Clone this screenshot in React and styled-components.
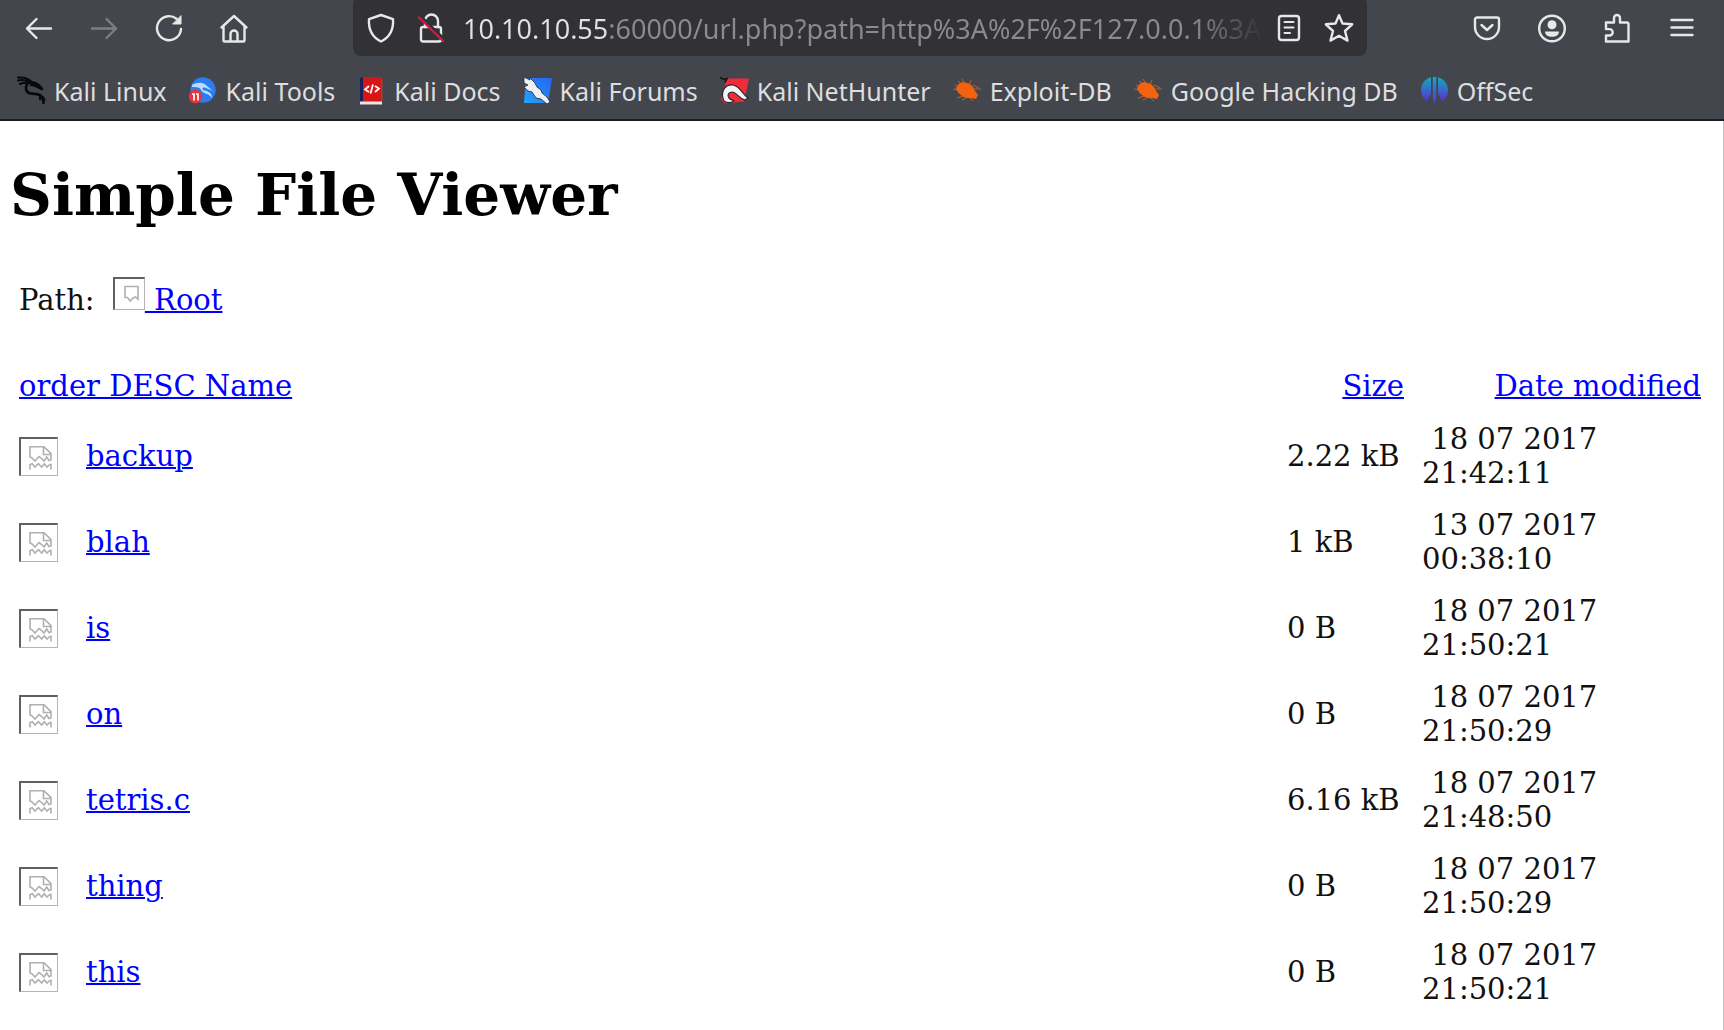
import React from "react";
import styled, { createGlobalStyle } from "styled-components";

const GlobalStyle = createGlobalStyle`
  * { box-sizing: border-box; }
  html, body { margin: 0; background: #fff; }
`;

const serif = `"DejaVu Serif", serif`;
const sans = `"Noto Sans", sans-serif`;

const Window = styled.div`
  display: flex;
  flex-direction: column;
  min-height: 100vh;
  overflow: hidden;
`;

const Chrome = styled.header`
  background: #44464e;
  border-bottom: 2px solid #1c1d22;
  font-family: ${sans};
  color: #dededf;
`;

const Toolbar = styled.div`
  display: flex;
  align-items: center;
  gap: 87px;
  height: 56px;
  padding: 0 10px 0 6px;
`;

const ButtonGroup = styled.div`
  display: flex;
`;

const IconButton = styled.button`
  display: flex;
  align-items: center;
  justify-content: center;
  flex: none;
  width: ${(p) => (p.$compact ? 50 : 65)}px;
  height: 54px;
  margin: 0 0 1px;
  padding: 0;
  border: 0;
  background: none;
  color: ${(p) => (p.disabled ? "#7d7e84" : "#e8e8e6")};
`;

const UrlBar = styled.div`
  display: flex;
  align-items: center;
  flex: 1;
  min-width: 0;
  height: 56px;
  padding: 0 3px;
  background: #313136;
  border-radius: 3px 3px 8px 8px;
`;

const UrlInput = styled.input`
  flex: 1;
  min-width: 0;
  height: 54px;
  margin: 0;
  padding: 0 0 0 7px;
  border: 0;
  outline: 0;
  font-family: ${sans};
  font-size: 27px;
  color: transparent;
  background: linear-gradient(
    to right,
    #e2e2e2 152px,
    #8b8b8f 152px,
    #8b8b8f calc(100% - 72px),
    transparent
  );
  background-clip: text;
  -webkit-background-clip: text;
`;

const Bookmarks = styled.nav`
  display: flex;
  align-items: center;
  gap: 22px;
  height: 63px;
  padding: 6px 17px 0;
  white-space: nowrap;
`;

const Bookmark = styled.a`
  display: flex;
  align-items: center;
  gap: 8px;
  font-size: 25px;
  line-height: 34px;
  color: inherit;
  text-decoration: none;
`;

const Page = styled.main`
  flex: 1;
  padding: 40px 22px 0 19px;
  border-right: 1px solid #c4c4c6;
  font-family: ${serif};
  font-size: 29px;
  line-height: 34px;
  color: #111;
`;

const Title = styled.h1`
  margin: 0 0 48px -9px;
  font-size: 58px;
  line-height: 68px;
  color: #000;
`;

const PathLine = styled.div`
  margin-bottom: 52px;
`;

const Link = styled.a`
  color: #0000ff;
  text-decoration: underline;
  text-decoration-thickness: 2px;
`;

const MissingImage = styled.svg`
  display: inline-block;
  vertical-align: ${(p) => (p.$inline ? "baseline" : "middle")};
  border: 2px solid;
  border-color: #606060 #b4b4b4 #b4b4b4 #606060;
  border-right-width: 1px;
  border-bottom-width: 1px;
`;

const PathImage = styled(MissingImage)`
  margin-left: 9px;
`;

const Files = styled.table`
  width: 100%;
  table-layout: fixed;
  border-collapse: collapse;
`;

const Col = styled.col`
  width: ${(p) => p.$width};
`;

const HeadCell = styled.th`
  padding: 0 ${(p) => (p.$gap ? 18 : 0)}px 10px 0;
  font-weight: normal;
  text-align: ${(p) => p.$align || "left"};
`;

const Cell = styled.td`
  height: 86px;
  padding: 0 ${(p) => (p.$date ? 80 : 0)}px 0 0;
  vertical-align: middle;
`;

const Stroke = ({ size = 30, width = 2.4, children }) => (
  <svg width={size} height={size} viewBox="0 0 30 30" fill="none" stroke="currentColor"
    strokeWidth={width} strokeLinecap="round" strokeLinejoin="round" aria-hidden="true">
    {children}
  </svg>
);

const BackIcon = () => (
  <Stroke><path d="M27 15.500H3M12.500 6 3 15.500 12.500 25" /></Stroke>
);
const ForwardIcon = () => (
  <Stroke><path d="M3 15.500h24M17.500 6 27 15.500 17.500 25" /></Stroke>
);
const ReloadIcon = () => (
  <Stroke>
    <path d="M27 16A12 12 0 1 1 22.500 5.800" />
    <path d="M27 3v8h-8z" fill="currentColor" strokeWidth="1" />
  </Stroke>
);
const HomeIcon = () => (
  <Stroke>
    <path d="M2.500 14.500 15 3l12.500 11.500M4.500 13v14.500a1 1 0 0 0 1 1h19a1 1 0 0 0 1-1V13" />
    <path d="M11.500 28v-7a3.500 3.500 0 0 1 7 0v7" />
  </Stroke>
);
const ShieldIcon = () => (
  <Stroke><path d="M15 2 27 6.200c.6 9-2.600 17.800-12 22.300C5.600 24 2.400 15.200 3 6.200z" /></Stroke>
);
const LockIcon = () => (
  <Stroke>
    <path d="M9 14V8a6.500 6.500 0 0 1 13 0v6" />
    <path d="M7 14h16a2 2 0 0 1 2 2v10.500a2 2 0 0 1-2 2H7a2 2 0 0 1-2-2V16a2 2 0 0 1 2-2z" />
    <path d="M4.500 3 29 27" stroke="#313136" strokeWidth="3" />
    <path d="M3 4.500 27 28" stroke="#d8173f" />
  </Stroke>
);
const ReaderIcon = () => (
  <Stroke>
    <rect x="5" y="3" width="20" height="24" rx="2.500" />
    <path d="M10.500 9h9M10.500 14.500h9M10.500 20h5.500" strokeWidth="2" />
  </Stroke>
);
const StarIcon = () => (
  <Stroke>
    <path d="M15 2.200 18.500 10.500 28.200 11.300 21 18 23.500 27.600 15 22.700 6.500 27.600 9 18 1.800 11.300 11.500 10.500z" />
  </Stroke>
);
const PocketIcon = () => (
  <Stroke>
    <path d="M5 4.500h20a2 2 0 0 1 2 2V14a12 12 0 0 1-24 0V6.500a2 2 0 0 1 2-2z" />
    <path d="M9.500 12 15 17l5.500-5" />
  </Stroke>
);
const AccountIcon = () => (
  <Stroke>
    <circle cx="15" cy="15.500" r="12.800" />
    <circle cx="15" cy="11.700" r="4.500" fill="currentColor" stroke="none" />
    <path d="M8 18.500h14c0 3.500-3 5.300-7 5.300s-7-1.800-7-5.300z" fill="currentColor" stroke="none" />
  </Stroke>
);
const PuzzleIcon = () => (
  <Stroke>
    <path d="M4 9.500h8V5a3 3 0 0 1 6 0v4.500h7a1.500 1.500 0 0 1 1.500 1.500v17.500H4v-6h3.500a3.200 3.200 0 0 0 0-6.400H4z" />
  </Stroke>
);
const MenuIcon = () => (
  <Stroke><path d="M4.500 7h21M4.500 14.500h21M4.500 22h21" /></Stroke>
);

const Fav = ({ children }) => (
  <svg width="29" height="29" viewBox="0 0 29 29" aria-hidden="true">{children}</svg>
);

const DragonFav = () => (
  <Fav>
    <g fill="none" stroke="#08090b" strokeLinecap="round" strokeLinejoin="round">
      <path d="M1 1.500C6 1 11 2 15 6M1 4.500c4-1 8 0 12 2M3 8c3-1.500 6-1.500 10-1" strokeWidth="2" />
      <path d="M12 6c-4 3-4 9 0 11 4 1.500 9 0 12 3 2 2.500 2.500 4.500 2.500 7" strokeWidth="2.600" />
      <path d="M13 6.500c4-.5 8 1 12 6.500l-5-2.500c-2-1-4-1.500-6-1.500" strokeWidth="2.600" />
      <path d="M23 19.500v4M26 21l1.500 3" strokeWidth="2" />
    </g>
  </Fav>
);
const ToolsFav = () => (
  <Fav>
    <circle cx="14" cy="14" r="12.700" fill="#2a7cf0" />
    <path d="M3 9c6-3 11-3 15 1l6 5-7-3c-3-1-4 0-3 2 4 1 9 2 9 8-3-5-9-4-11-8-1-3-5-3-9-3z" fill="#b9dcfb" />
    <circle cx="6.500" cy="20.500" r="6.700" fill="#ee3338" />
    <path d="M3 18h2v6.500M7 18h2v6.500" fill="none" stroke="#fff" strokeWidth="1.700" />
  </Fav>
);
const DocsFav = () => (
  <Fav>
    <path d="M4 1h20v26H4z" fill="#d91414" />
    <path d="M3 2l3-1v25H3z" fill="#16245c" />
    <path d="M24 2v24l1.500-2V3z" fill="#88522f" />
    <path d="M3 25.500h22v3H3z" fill="#e9e6e6" />
    <path d="M12 10l-4 3.500 4 2.500M16 8.500l-2.500 9M18 10l4 2.500-4 3.500" fill="none" stroke="#fff" strokeWidth="1.800" />
  </Fav>
);
const ForumsFav = () => (
  <Fav>
    <defs>
      <linearGradient id="forums" x1="1" y1="0" x2="0" y2="1">
        <stop offset="0" stopColor="#2563f5" />
        <stop offset="1" stopColor="#27a3fb" />
      </linearGradient>
    </defs>
    <path d="M3 2h26l-4 25H1z" fill="url(#forums)" />
    <path d="M1 1l6 3-1-3 6 6 2 4 4 3 1 3 5 4 3 5-3 2-6-5-5-1-4-6-4-1-4-4H1l4-2-4-2z" fill="#eef1f5" stroke="#2a3340" strokeWidth=".9" strokeLinejoin="round" />
  </Fav>
);
const NetHunterFav = () => (
  <Fav>
    <path d="M7 2.500h22l-5 23-19 2-4-4z" fill="#f02c38" />
    <path d="M0 1.500l4 2 3-1-2 4" fill="none" stroke="#141416" strokeWidth="1.600" />
    <path d="M4 25C0 16 5 8 13 9c7 1 9 9 15 13l-3 2c-6-1-8-8-13-8-4 0-5 4-3 6s3 2 5 3c-3 2-7 2-10 0z" fill="#f5f5f5" stroke="#26262a" strokeWidth="1.100" />
  </Fav>
);
const BugFav = () => (
  <Fav>
    <g stroke="#c75f26" strokeWidth="1" fill="none">
      <path d="M2 9l5 3M0 13l6 1M4 22l6-2M9 24l4-2M9 3l3 5M5 5l5 4M18 4l-2 5M20 9l6 3M22 13h6M17 22l3 3" />
    </g>
    <path d="M3 13C4 8 9 5 14 7c4 1 7 4 8 8l3 4-2 4-5-1c-6 1-12-3-15-9z" fill="#f2620f" />
  </Fav>
);
const OffSecFav = () => (
  <Fav>
    <defs>
      <linearGradient id="offsec" x1="0" y1="0" x2="0" y2="1">
        <stop offset="0" stopColor="#14a9bd" />
        <stop offset="1" stopColor="#5a2fd2" />
      </linearGradient>
    </defs>
    <g fill="url(#offsec)">
      <path d="M11 1.500v16L7 25C2.500 22.500 1 18 1 14 1 7.500 5.500 2.500 11 1.500z" />
      <path d="M18 1.500v16l4 7.500c4.500-2.500 6-7 6-11 0-6.500-4.500-11.500-10-12.500z" />
      <path d="M12.800 1h3.400v23l-1.700 4-1.700-4z" />
    </g>
  </Fav>
);

const bookmarks = [
  ["Kali Linux", DragonFav],
  ["Kali Tools", ToolsFav],
  ["Kali Docs", DocsFav],
  ["Kali Forums", ForumsFav],
  ["Kali NetHunter", NetHunterFav],
  ["Exploit-DB", BugFav],
  ["Google Hacking DB", BugFav],
  ["OffSec", OffSecFav],
];

const files = [
  ["backup", "2.22 kB", "18 07 2017", "21:42:11"],
  ["blah", "1 kB", "13 07 2017", "00:38:10"],
  ["is", "0 B", "18 07 2017", "21:50:21"],
  ["on", "0 B", "18 07 2017", "21:50:29"],
  ["tetris.c", "6.16 kB", "18 07 2017", "21:48:50"],
  ["thing", "0 B", "18 07 2017", "21:50:29"],
  ["this", "0 B", "18 07 2017", "21:50:21"],
];

const FileImage = () => (
  <MissingImage width="39" height="39" viewBox="0 0 36 36" fill="none" stroke="#b0b0b0" strokeWidth="1.600" aria-hidden="true">
    <path d="M9 18V7.700h14l7 7V21l-2 .5-2.300-3.500L23 22l-2.300-2.500-2.700-2L14 22l-3-3z" />
    <path d="M22.500 8v7.500H30" />
    <path d="M9 30.500v-5l2.300-.8L14 28l3.300-3.300 3.400 3.300 2.600-3.300L26 28l2.700-2.500H30v5" />
  </MissingImage>
);

export default function App() {
  return (
    <Window>
      <GlobalStyle />
      <Chrome>
        <Toolbar>
          <ButtonGroup>
            <IconButton aria-label="Back"><BackIcon /></IconButton>
            <IconButton aria-label="Forward" disabled><ForwardIcon /></IconButton>
            <IconButton aria-label="Reload"><ReloadIcon /></IconButton>
            <IconButton aria-label="Home"><HomeIcon /></IconButton>
          </ButtonGroup>
          <UrlBar>
            <IconButton $compact aria-label="Tracking protection"><ShieldIcon /></IconButton>
            <IconButton $compact aria-label="Connection not secure"><LockIcon /></IconButton>
            <UrlInput
              aria-label="Address"
              spellCheck={false}
              defaultValue="10.10.10.55:60000/url.php?path=http%3A%2F%2F127.0.0.1%3A"
            />
            <IconButton $compact aria-label="Reader view"><ReaderIcon /></IconButton>
            <IconButton $compact aria-label="Bookmark this page"><StarIcon /></IconButton>
          </UrlBar>
          <ButtonGroup>
            <IconButton aria-label="Save to Pocket"><PocketIcon /></IconButton>
            <IconButton aria-label="Account"><AccountIcon /></IconButton>
            <IconButton aria-label="Extensions"><PuzzleIcon /></IconButton>
            <IconButton aria-label="Menu"><MenuIcon /></IconButton>
          </ButtonGroup>
        </Toolbar>
        <Bookmarks aria-label="Bookmarks">
          {bookmarks.map(([label, Icon]) => (
            <Bookmark href="#" key={label}>
              <Icon />
              {label}
            </Bookmark>
          ))}
        </Bookmarks>
      </Chrome>
      <Page>
        <Title>Simple File Viewer</Title>
        <PathLine>
          Path:{" "}
          <Link href="#">
            <PathImage $inline width="32" height="33" viewBox="0 0 29 30" fill="none" stroke="#b0b0b0" strokeWidth="1.600" aria-hidden="true">
              <path d="M10 7.500h13V20l-2.500-2-2.500 1-2.700 3-2.800-3.500H10z" />
            </PathImage>
            {" Root"}
          </Link>
        </PathLine>
        <Files>
          <colgroup>
            <Col $width="67px" />
            <Col />
            <Col $width="135px" />
            <Col $width="279px" />
          </colgroup>
          <thead>
            <tr>
              <HeadCell colSpan={2}><Link href="#">order DESC Name</Link></HeadCell>
              <HeadCell $align="right" $gap><Link href="#">Size</Link></HeadCell>
              <HeadCell $align="right"><Link href="#">Date modified</Link></HeadCell>
            </tr>
          </thead>
          <tbody>
            {files.map(([name, size, day, time]) => (
              <tr key={name}>
                <Cell><FileImage /></Cell>
                <Cell><Link href="#">{name}</Link></Cell>
                <Cell>{size}</Cell>
                <Cell $date>{"\u00a0" + day} {time}</Cell>
              </tr>
            ))}
          </tbody>
        </Files>
      </Page>
    </Window>
  );
}
